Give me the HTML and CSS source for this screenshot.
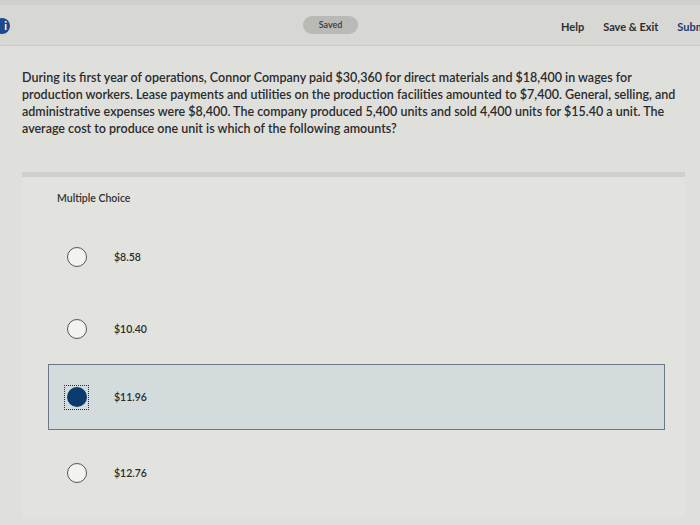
FILE: index.html
```html
<!DOCTYPE html>
<html lang="en">
<head>
  <meta charset="UTF-8" />
  <title>Multiple Choice</title>
  <link rel="stylesheet" href="styles.css">
</head>
<body>
  <div class="topbar">
    <div class="info-icon">i</div>
    <div class="saved">Saved</div>
    <nav class="links">
      <span class="link">Help</span>
      <span class="link">Save &amp; Exit</span>
      <span class="link submit">Submit</span>
    </nav>
  </div>

  <p class="question">During its first year of operations, Connor Company paid $30,360 for direct materials and $18,400 in wages for production workers. Lease payments and utilities on the production facilities amounted to $7,400. General, selling, and administrative expenses were $8,400. The company produced 5,400 units and sold 4,400 units for $15.40 a unit. The average cost to produce one unit is which of the following amounts?</p>

  <div class="panel">
    <div class="panel-head">Multiple Choice</div>
    <ul class="options">
      <li class="option"><span class="focus"><span class="radio"></span></span><span class="label">$8.58</span></li>
      <li class="option"><span class="focus"><span class="radio"></span></span><span class="label">$10.40</span></li>
      <li class="option selected"><span class="focus"><span class="radio"></span></span><span class="label">$11.96</span></li>
      <li class="option"><span class="focus"><span class="radio"></span></span><span class="label">$12.76</span></li>
    </ul>
  </div>
</body>
</html>
```

FILE: styles.css
```css
* {
  margin: 0;
  padding: 0;
  box-sizing: border-box;
}

html, body {
  height: 100%;
  overflow: hidden;
}

body {
  font-family: Lato, "Liberation Sans", sans-serif;
  background: #dfdfdc;
  color: #222;
}

.topbar {
  position: relative;
  height: 46px;
  background: #d7d7d4;
  border-top: 5px solid #cfcfcc;
  border-bottom: 1px solid #c9c9c6;
  display: flex;
  align-items: center;
}

.info-icon {
  position: absolute;
  left: -6px;
  top: 13px;
  width: 16px;
  height: 16px;
  border-radius: 50%;
  background: #1d4a8c;
  color: #fff;
  font-size: 11px;
  font-weight: 700;
  text-align: right;
  padding-right: 3px;
  line-height: 16px;
}

.saved {
  position: absolute;
  left: 303px;
  top: 11px;
  width: 55px;
  height: 18px;
  border-radius: 9px;
  background: #b9b9b6;
  font-size: 9px;
  font-weight: 600;
  color: #3a3a3a;
  text-align: center;
  line-height: 18px;
}

.links {
  margin-left: 561px;
  display: flex;
  gap: 19px;
  white-space: nowrap;
  margin-top: 2px;
}

.link {
  font-size: 11px;
  font-weight: 700;
  color: #2e2e2e;
}

.link.submit {
  color: #24396a;
}

.question {
  margin: 23px 18px 0 22px;
  font-size: 12.5px;
  line-height: 17px;
  font-weight: 600;
  color: #2b2b2b;
}

.panel {
  margin: 35px 15px 0 22px;
  height: 345px;
  background: #e2e2df;
  border-top: 5px solid #d0d0cd;
  padding-top: 14px;
}

.panel-head {
  font-size: 10.5px;
  font-weight: 600;
  color: #333;
  padding-left: 35px;
  line-height: 14px;
  margin-bottom: 19px;
}

.options {
  list-style: none;
  padding-left: 26px;
}

.option {
  width: 617px;
  height: 66px;
  margin-bottom: 6px;
  display: flex;
  align-items: center;
  padding-left: 15px;
  border: 1px solid transparent;
}

.focus {
  width: 25px;
  height: 25px;
  display: flex;
  align-items: center;
  justify-content: center;
  border: 1px dotted transparent;
  flex-shrink: 0;
}

.radio {
  width: 20px;
  height: 20px;
  border-radius: 50%;
  border: 1.5px solid #555;
  background: #f2f2f0;
}

.label {
  margin-left: 25px;
  font-size: 10.5px;
  font-weight: 600;
  color: #2b2b2b;
}

.option.selected {
  margin-top: -4px;
  margin-bottom: 10px;
  background: #d3dbdd;
  border: 1px solid #6c7884;
}

.option.selected .focus {
  border-color: #0b3a6e;
}

.option.selected .radio {
  border: none;
  background: #0b3a6e;
}
```
